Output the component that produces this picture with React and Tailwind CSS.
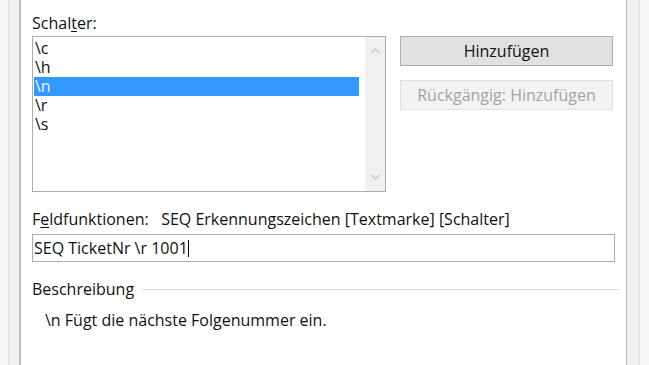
const items = ['\\c', '\\h', '\\n', '\\r', '\\s'];

function Chevron({ up }) {
  return (
    <svg width="9" height="6" viewBox="0 0 9 6" className="block">
      <path d={up ? 'M0.5 5 L4.5 1 L8.5 5' : 'M0.5 1 L4.5 5 L8.5 1'} fill="none" stroke="#c2c2c2" strokeWidth="1.2" />
    </svg>
  );
}

export default function App() {
  return (
    <div className="w-[649px] h-[365px] flex overflow-hidden text-[16px] text-[#111]" style={{ fontFamily: '"Open Sans", "Noto Sans", sans-serif' }}>
      <div className="w-[9px] bg-[#f7f7f7] border-r border-[#e2e2e2]" />
      <div className="w-[12px] bg-[#f0f0f0] border-r-2 border-[#bdbdbd]" />
      <div className="flex-1 bg-white pl-[11px] pr-[10px] flex flex-col">
        <div className="mt-[13px] h-[20px] leading-[20px]">
          Schal<span className="underline underline-offset-2">t</span>er:
        </div>
        <div className="mt-[3px] flex gap-[14px]">
          <div className="w-[354px] h-[156px] border border-[#adadad] flex">
            <div className="flex-1 pt-[2px] pl-[1px] pr-[6px]">
              {items.map(it => (
                <div key={it} className={`h-[19px] leading-[19px] pl-[1px] ${it === '\\n' ? 'bg-[#3399ff] text-[#eaf4ff]' : ''}`}>{it}</div>
              ))}
            </div>
            <div className="w-[20px] bg-[#f0f0f0] flex flex-col items-center justify-between py-[11px]">
              <Chevron up />
              <Chevron />
            </div>
          </div>
          <div className="flex flex-col gap-[14px]">
            <button className="w-[213px] h-[30px] bg-[#e1e1e1] border border-[#adadad] text-[#111]">Hinzufügen</button>
            <button className="w-[213px] h-[30px] bg-[#f3f3f3] border border-[#e0e0e0] text-[#a3a3a3]">Rückgängig: Hinzufügen</button>
          </div>
        </div>
        <div className="mt-[17px] h-[20px] leading-[20px] whitespace-pre">
          F<span className="underline underline-offset-2">e</span>ldfunktionen:   SEQ Erkennungszeichen [Textmarke] [Schalter]
        </div>
        <div className="mt-[5px] w-[583px] h-[28px] border border-[#adadad] flex items-center px-[1px]">
          <span>SEQ TicketNr \r 1001</span>
          <span className="w-px h-[17px] bg-black" />
        </div>
        <div className="mt-[17px] flex items-center gap-[8px]">
          <span className="h-[20px] leading-[20px]">Beschreibung</span>
          <div className="flex-1 h-px bg-[#dcdcdc] -mr-[4px]" />
        </div>
        <div className="mt-[11px] pl-[13px] h-[20px] leading-[20px]">\n Fügt die nächste Folgenummer ein.</div>
      </div>
      <div className="w-[14px] bg-[#f0f0f0] border-l border-[#b5b5b5] border-r border-r-[#e2e2e2]" />
      <div className="w-[9px] bg-[#f7f7f7]" />
    </div>
  );
}
